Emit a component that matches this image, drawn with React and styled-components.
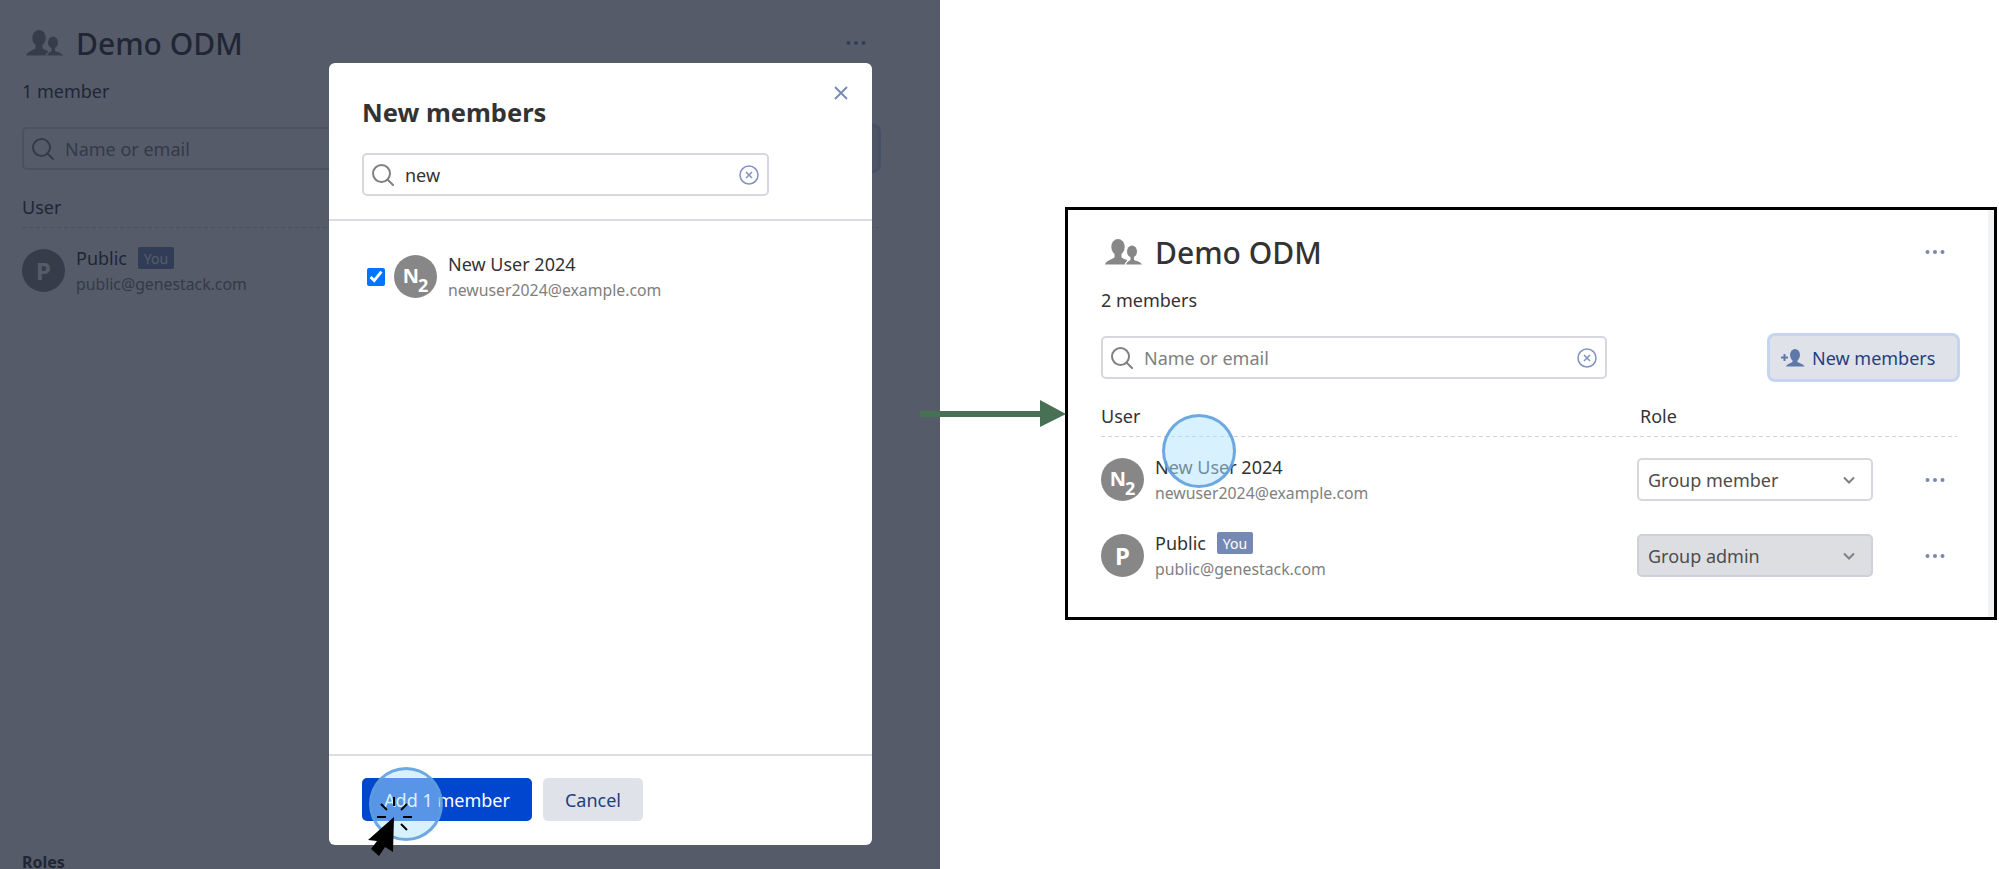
import React from "react";
import styled, { createGlobalStyle } from "styled-components";

const Global = createGlobalStyle`
  html, body { margin: 0; padding: 0; background: #fff; }
  body { font-family: "Noto Sans", "Liberation Sans", sans-serif; color: #333; }
  * { box-sizing: border-box; }
`;

const Stage = styled.div`
  position: relative;
  display: flex;
  width: 1999px;
  height: 869px;
  overflow: hidden;
`;
const LeftPane = styled.section`
  position: relative;
  flex: 0 0 940px;
  height: 869px;
  overflow: hidden;
  padding: 20px 0 0 22px;
  background: #fff;
`;
const Scrim = styled.div`
  position: absolute;
  inset: 0;
  background: rgba(25, 34, 52, 0.74);
`;
const RightPane = styled.section`
  flex: 1;
  padding: 207px 2px 0 125px;
`;
const Frame = styled.div`
  display: flex;
  height: 413px;
  border: 3px solid #000;
  background: #fff;
`;
const FrameBody = styled.div`
  flex: 1;
  padding: 19px 0 0 33px;
`;
const Track = styled.div`
  flex: 0 0 6px;
  background: #f2f3f5;
`;

const Page = styled.div`
  width: 856px;
`;
const TitleRow = styled.div`
  display: flex;
  align-items: center;
  height: 46px;
  padding-left: 4px;
`;
const Title = styled.h1`
  margin: 2px 0 0 13px;
  flex: 1;
  font-size: 30px;
  line-height: 44px;
  font-weight: 500;
  color: #333;
`;
const Count = styled.div`
  margin-top: 13px;
  font-size: 18px;
  line-height: 24px;
`;
const Toolbar = styled.div`
  display: flex;
  justify-content: space-between;
  align-items: center;
  margin-top: 24px;
`;
const SearchBox = styled.div`
  display: flex;
  align-items: center;
  width: ${(p) => p.$w}px;
  height: 43px;
  padding: 0 8px;
  border: 2px solid #d6d7df;
  border-radius: 5px;
  background: #fff;
`;
const SearchText = styled.span`
  flex: 1;
  margin-left: 11px;
  font-size: 18px;
  color: ${(p) => (p.$filled ? "#333" : "#808080")};
`;
const NewButton = styled.button`
  display: flex;
  align-items: center;
  gap: 7px;
  width: 187px;
  height: 43px;
  padding: 0 11px;
  border: 0;
  border-radius: 5px;
  background: #dfe2e8;
  box-shadow: 0 0 0 3px #c6d4f1;
  color: #1f3f7d;
  font: 400 18px "Noto Sans", sans-serif;
`;
const HeadRow = styled.div`
  display: grid;
  grid-template-columns: 539px 1fr;
  margin-top: 25px;
  padding-bottom: 9px;
  background: linear-gradient(90deg, #cfd1d8 4px, transparent 4px) left bottom / 7px 1px repeat-x;
  font-size: 18px;
  line-height: 24px;
`;
const Rows = styled.div`
  display: flex;
  flex-direction: column;
  gap: 33px;
  margin-top: 21px;
`;
const Row = styled.div`
  display: grid;
  grid-template-columns: 536px 236px 1fr;
  align-items: center;
`;
const Person = styled.div`
  display: flex;
  align-items: center;
  gap: 11px;
  height: 43px;
`;
const Avatar = styled.div`
  flex: none;
  display: flex;
  align-items: center;
  justify-content: center;
  width: 43px;
  height: 43px;
  border-radius: 50%;
  background: #878787;
  color: #fff;
  font-size: 24px;
  font-weight: 700;
  line-height: 1;
`;
const Sub = styled.sub`
  font-size: 18px;
  line-height: 0;
  vertical-align: -6px;
  margin-left: -1px;
`;
const Sup = styled.span`
  font-size: 20px;
  vertical-align: 3px;
`;
const Who = styled.div`
  display: flex;
  flex-direction: column;
`;
const NameLine = styled.div`
  display: flex;
  align-items: center;
  gap: 11px;
  height: 22px;
  font-size: 18px;
`;
const Badge = styled.span`
  display: inline-flex;
  align-items: center;
  justify-content: center;
  width: 36px;
  height: 22px;
  border-radius: 2px;
  background: #7589b4;
  color: #fff;
  font-size: 14px;
`;
const Email = styled.div`
  margin-top: 5px;
  font-size: 15.8px;
  line-height: 20px;
  color: #808080;
`;
const Select = styled.div`
  display: flex;
  align-items: center;
  justify-content: space-between;
  height: 43px;
  padding: 0 16px 0 9px;
  border: 2px solid ${(p) => (p.$locked ? "#cfd1d8" : "#d6d7df")};
  border-radius: 5px;
  background: ${(p) => (p.$locked ? "#dddee2" : "#fff")};
  color: #4d4d4d;
  font-size: 18px;
`;
const DotsCell = styled.div`
  display: flex;
  justify-content: flex-end;
  padding-right: 12px;
`;
const RolesHeading = styled.div`
  margin-top: 563px;
  font-size: 16px;
  line-height: 14px;
  font-weight: 700;
`;

const Modal = styled.div`
  position: absolute;
  left: 329px;
  top: 63px;
  width: 543px;
  height: 782px;
  display: flex;
  flex-direction: column;
  background: #fff;
  border-radius: 6px;
`;
const ModalHead = styled.div`
  position: relative;
  padding: 33px 33px 23px;
  border-bottom: 2px solid #dcdde3;
`;
const ModalTitle = styled.h2`
  margin: 0 0 25px;
  font-size: 25.5px;
  line-height: 32px;
  font-weight: 700;
  color: #333;
`;
const Close = styled.div`
  position: absolute;
  right: 24px;
  top: 23px;
  display: flex;
`;
const ModalList = styled.div`
  flex: 1;
  padding: 34px 0 0 38px;
`;
const Choice = styled.label`
  display: flex;
  align-items: center;
  gap: 9px;
`;
const Check = styled.input`
  width: 18px;
  height: 18px;
  margin: 0;
`;
const ModalFoot = styled.div`
  display: flex;
  gap: 11px;
  padding: 22px 33px 24px;
  border-top: 2px solid #dcdde3;
`;
const Btn = styled.button`
  height: 43px;
  width: ${(p) => p.$w}px;
  border: 0;
  border-radius: 5px;
  background: ${(p) => (p.$primary ? "#0046cf" : "#dfe2e8")};
  color: ${(p) => (p.$primary ? "#fff" : "#1f3f7d")};
  font: 400 18px "Noto Sans", sans-serif;
`;

const Ripple = styled.div`
  position: absolute;
  left: ${(p) => p.$x - p.$r}px;
  top: ${(p) => p.$y - p.$r}px;
  width: ${(p) => p.$r * 2}px;
  height: ${(p) => p.$r * 2}px;
  border-radius: 50%;
  border: 3px solid rgba(90, 155, 220, 0.85);
  background: rgba(175, 228, 255, 0.5);
`;
const Overlay = styled.svg`
  position: absolute;
  left: ${(p) => p.$x}px;
  top: ${(p) => p.$y}px;
`;

const GroupIcon = () => (
  <svg width="37" height="26" viewBox="0 0 37 26" fill="#878787" style={{ flex: "none" }}>
    <ellipse cx="13" cy="8" rx="6.700" ry="8" />
    <path d="M0 25.500c1-4 6-4.500 9.500-7v-4h7v4c2.500 1.500 4.500 2 6 3-1.500 1-2.500 2.500-2.800 4z" />
    <ellipse cx="27" cy="12.500" rx="5" ry="6" />
    <path d="M21 25.500c.5-2.500 3-3.500 4.500-4.500v-4h3.500v4c2 1 6.500 1.500 8 4.500z" />
  </svg>
);
const SearchIcon = () => (
  <svg width="22" height="22" viewBox="0 0 22 22" fill="none" stroke="#808080" strokeWidth="2" style={{ flex: "none" }}>
    <circle cx="9.500" cy="9.500" r="8.500" />
    <path d="M15.500 15.500l5.500 5.500" strokeLinecap="round" />
  </svg>
);
const ClearIcon = () => (
  <svg width="20" height="20" viewBox="0 0 20 20" fill="none" stroke="#7f93bc" strokeWidth="1.500" style={{ flex: "none" }}>
    <circle cx="10" cy="10" r="9" />
    <path d="M7 7l6 6M13 7l-6 6" />
  </svg>
);
const Dots = () => (
  <svg width="20" height="6" viewBox="0 0 20 6" fill="#7589b4" style={{ flex: "none" }}>
    <circle cx="2.500" cy="3" r="2" />
    <circle cx="10" cy="3" r="2" />
    <circle cx="17.500" cy="3" r="2" />
  </svg>
);
const Chevron = () => (
  <svg width="12" height="8" viewBox="0 0 12 8" fill="none" stroke="#808080" strokeWidth="2">
    <path d="M1 1.500l5 5 5-5" />
  </svg>
);
const CloseIcon = () => (
  <svg width="14" height="14" viewBox="0 0 14 14" stroke="#7589b4" strokeWidth="1.800">
    <path d="M1 1l12 12M13 1L1 13" />
  </svg>
);
const AddPersonIcon = () => (
  <svg width="24" height="18" viewBox="0 0 24 18" fill="#5f78aa" style={{ flex: "none" }}>
    <path d="M0 7.500h7v2H0zM2.500 5h2v7h-2z" />
    <ellipse cx="14" cy="6" rx="5" ry="6" />
    <path d="M5 17.500c.5-2 4-3 6.500-4.500v-3h5v3c2.500 1.500 6.500 2.500 7 4.500z" />
  </svg>
);

const GroupPage = ({ count, rows, children }) => (
  <Page>
    <TitleRow>
      <GroupIcon />
      <Title>Demo ODM</Title>
      <DotsCell>
        <Dots />
      </DotsCell>
    </TitleRow>
    <Count>{count}</Count>
    <Toolbar>
      <SearchBox $w={506}>
        <SearchIcon />
        <SearchText>Name or email</SearchText>
        <ClearIcon />
      </SearchBox>
      <NewButton>
        <AddPersonIcon />
        New members
      </NewButton>
    </Toolbar>
    <HeadRow>
      <span>User</span>
      <span>Role</span>
    </HeadRow>
    <Rows>
      {rows.map((r) => (
        <Row key={r.email}>
          <Person>
            <Avatar>{r.avatar}</Avatar>
            <Who>
              <NameLine>
                {r.name}
                {r.you && <Badge>You</Badge>}
              </NameLine>
              <Email>{r.email}</Email>
            </Who>
          </Person>
          <Select $locked={r.locked}>
            {r.role}
            <Chevron />
          </Select>
          <DotsCell>
            <Dots />
          </DotsCell>
        </Row>
      ))}
    </Rows>
    {children}
  </Page>
);

const N2 = () => (
  <span>
    <Sup>N</Sup>
    <Sub>2</Sub>
  </span>
);

const publicUser = { avatar: "P", name: "Public", you: true, email: "public@genestack.com", role: "Group admin", locked: true };
const newUser = { avatar: <N2 />, name: "New User 2024", email: "newuser2024@example.com", role: "Group member" };

export default function App() {
  return (
    <Stage>
      <Global />
      <LeftPane>
        <GroupPage count="1 member" rows={[publicUser]}>
          <RolesHeading>Roles</RolesHeading>
        </GroupPage>
        <Scrim />
        <Modal>
          <ModalHead>
            <ModalTitle>New members</ModalTitle>
            <Close>
              <CloseIcon />
            </Close>
            <SearchBox $w={407}>
              <SearchIcon />
              <SearchText $filled>new</SearchText>
              <ClearIcon />
            </SearchBox>
          </ModalHead>
          <ModalList>
            <Choice>
              <Check type="checkbox" defaultChecked />
              <Person>
                <Avatar>
                  <N2 />
                </Avatar>
                <Who>
                  <NameLine>New User 2024</NameLine>
                  <Email>newuser2024@example.com</Email>
                </Who>
              </Person>
            </Choice>
          </ModalList>
          <ModalFoot>
            <Btn $primary $w={170}>Add 1 member</Btn>
            <Btn $w={100}>Cancel</Btn>
          </ModalFoot>
        </Modal>
      </LeftPane>
      <RightPane>
        <Frame>
          <FrameBody>
            <GroupPage count="2 members" rows={[newUser, publicUser]} />
          </FrameBody>
          <Track />
        </Frame>
      </RightPane>
      <Overlay $x={920} $y={400} width="146" height="28" viewBox="0 0 146 28">
        <path d="M0 11h120V0l26 14-26 13V17H0z" fill="#477055" />
      </Overlay>
      <Ripple $x={406} $y={804} $r={37} />
      <Ripple $x={1199} $y={451} $r={37} />
      <Overlay $x={365} $y={795} width="50" height="64" viewBox="0 0 50 64">
        <path d="M29 22L3 45l9 1-6 8 8 7 6-9 8 5z" fill="#000" />
        <path d="M29 2v9M12 22h9M38 22h9M16 9l6 6M42 9l-6 6M36 29l6 6" stroke="#000" strokeWidth="2" fill="none" />
      </Overlay>
    </Stage>
  );
}
